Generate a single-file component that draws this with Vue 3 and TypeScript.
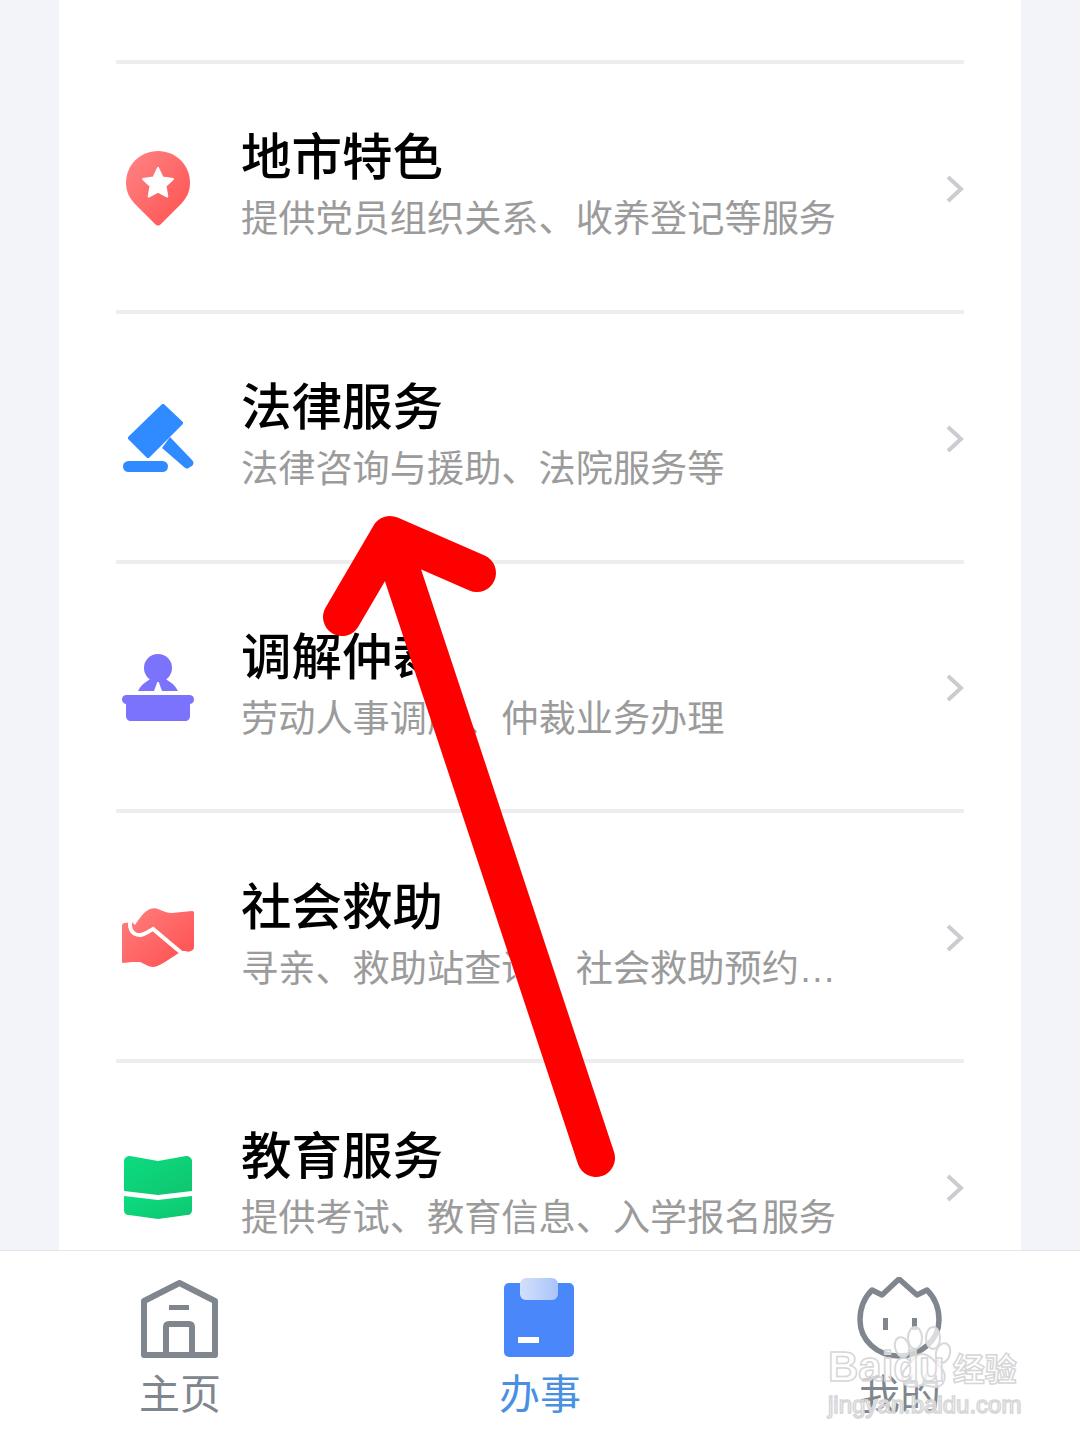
<template>
  <div class="page">
    <main class="content">
      <div class="card">
        <div v-for="item in services" :key="item.title" class="row">
          <div class="row-icon">
            <svg v-if="item.icon === 'pin'" width="70" height="78" viewBox="0 0 70 78">
              <defs>
                <linearGradient id="pinFill" x1="0" y1="0" x2="1" y2="1">
                  <stop offset="0" stop-color="#ff8585" />
                  <stop offset="1" stop-color="#ff4f4f" />
                </linearGradient>
              </defs>
              <path d="M35 1C17 1 3 15 3 33c0 9 4 16 10 22l19 19c2 2 4 2 6 0l19-19c6-6 10-13 10-22C67 15 53 1 35 1z" fill="url(#pinFill)" />
              <path d="M35 18l4.500 9.500 10.500 1.500-7.500 7 1.800 10.500-9.300-5-9.300 5 1.800-10.500-7.500-7 10.500-1.500z" fill="#fff" stroke="#fff" stroke-width="2" stroke-linejoin="round" />
            </svg>
            <svg v-else-if="item.icon === 'gavel'" width="74" height="70" viewBox="0 0 74 70">
              <path d="M42 2L60 19 27 52 9 34z" fill="#2f8bff" stroke="#2f8bff" stroke-width="4" stroke-linejoin="round" />
              <path d="M49 33L71 56c2 2 2 4 0 6l-2 1c-2 2-4 2-6 0L41 44z" fill="#2f8bff" />
              <rect x="2" y="57" width="45" height="11" rx="5.500" fill="#2f8bff" />
            </svg>
            <svg v-else-if="item.icon === 'desk'" width="74" height="68" viewBox="0 0 74 68">
              <circle cx="37" cy="14" r="14" fill="#7b73fb" />
              <path d="M17 37c4-8 11-11 16-14l4 2 4-2c5 3 12 6 16 14H41l-4-11-4 11z" fill="#7b73fb" />
              <rect x="1" y="41" width="72" height="9" rx="4.500" fill="#7b73fb" />
              <path d="M5 46h64v16c0 3-2 5-5 5H10c-3 0-5-2-5-5z" fill="#7b73fb" />
            </svg>
            <svg v-else-if="item.icon === 'hands'" width="76" height="60" viewBox="0 0 76 60">
              <defs>
                <linearGradient id="handFill" x1="0" y1="0" x2="1" y2="1">
                  <stop offset="0" stop-color="#ff8080" />
                  <stop offset="1" stop-color="#ff4d4d" />
                </linearGradient>
              </defs>
              <path d="M2 18c0-2 1-3 3-3l7-1 3 3C20 9 25 3 30 1c3-1 6-1 8 0 5 2 9 4 14 4l20-2c2 0 2 1 2 2v34c0 2-1 3-3 4-2 1-4 1-5 0l-4 0-17 11c-4 2-8 5-12 5-4 0-8-3-13-5H12l-9 1c-1 0-1-1-1-3z" fill="url(#handFill)" />
              <path d="M11 11C8 20 12 27 20 27 25 27 29 23 33 21L64 47" fill="none" stroke="#fff" stroke-width="4" />
            </svg>
            <svg v-else width="68" height="64" viewBox="0 0 68 64">
              <defs>
                <linearGradient id="bookFill" x1="0" y1="0" x2="1" y2="1">
                  <stop offset="0" stop-color="#0bdc80" />
                  <stop offset="1" stop-color="#10c56e" />
                </linearGradient>
              </defs>
              <path d="M6 0l28 5 28-5c3 0 6 2 6 5v30l-34 4L0 35V5c0-3 3-5 6-5z" fill="url(#bookFill)" />
              <path d="M0 40l34 4 34-4v14c0 3-2 5-5 5l-29 4-29-4c-3 0-5-2-5-5z" fill="url(#bookFill)" />
            </svg>
          </div>
          <div class="row-text">
            <div class="row-title">{{ item.title }}</div>
            <div class="row-desc">{{ item.desc }}</div>
          </div>
          <svg class="chevron" width="18" height="28" viewBox="0 0 18 28">
            <path d="M2 2l13 12L2 26" fill="none" stroke="#cbcbd0" stroke-width="4" />
          </svg>
        </div>
      </div>
    </main>

    <nav class="tabbar">
      <div class="tab">
        <svg width="80" height="84" viewBox="0 0 80 84">
          <path d="M4 78V24L39.500 6 75 24v54z" fill="none" stroke="#80868d" stroke-width="6" stroke-linejoin="round" />
          <path d="M26 78V50c0-2 1-3 3-3h20c2 0 3 1 3 3v28" fill="none" stroke="#80868d" stroke-width="6" />
          <rect x="29" y="28" width="20" height="5" fill="#80868d" />
        </svg>
        <span class="tab-label">主页</span>
      </div>
      <div class="tab tab--active">
        <svg width="80" height="84" viewBox="0 0 80 84">
          <defs>
            <linearGradient id="clipFill" x1="0" y1="0" x2="1" y2="0">
              <stop offset="0" stop-color="#d3e0fb" />
              <stop offset="1" stop-color="#a9c4fa" />
            </linearGradient>
          </defs>
          <rect x="4" y="6" width="70" height="74" rx="5" fill="#4a87fb" />
          <rect x="20" y="1" width="38" height="22" rx="6" fill="url(#clipFill)" />
          <rect x="18" y="60" width="21" height="6" fill="#fff" />
        </svg>
        <span class="tab-label">办事</span>
      </div>
      <div class="tab">
        <svg width="86" height="84" viewBox="0 0 86 84">
          <path d="M42 2L60 18 70 13C77 20 82 31 82 43 82 63 64 79 42 79 20 79 3 63 3 43 3 31 8 20 15 13L25 18z" fill="none" stroke="#80868d" stroke-width="5.500" stroke-linejoin="round" />
          <rect x="26" y="41" width="5" height="12" fill="#80868d" />
          <rect x="55" y="41" width="5" height="12" fill="#80868d" />
        </svg>
        <span class="tab-label">我的</span>
      </div>
    </nav>

    <!-- red arrow drawn on the screenshot -->
    <svg class="arrow" width="1080" height="1440" viewBox="0 0 1080 1440">
      <path d="M596 1158L390 536M342 617L390 535 477 573" fill="none" stroke="#ff0000" stroke-width="38" stroke-linecap="round" stroke-linejoin="round" />
    </svg>

    <!-- watermark -->
    <div class="watermark">
      <svg class="paw" width="70" height="76" viewBox="0 0 70 76">
        <g fill="#fff" fill-opacity=".7" stroke="#d8d8da" stroke-width="2">
          <ellipse cx="14" cy="27" rx="7" ry="10" transform="rotate(-15 14 27)" />
          <ellipse cx="27" cy="18" rx="7" ry="11" />
          <ellipse cx="45" cy="18" rx="7" ry="11" />
          <ellipse cx="55" cy="33" rx="7" ry="10" transform="rotate(15 55 33)" />
          <path d="M34 34c-8 0-10 8-16 14-6 6-5 18 5 19 5 0 8-2 12-2s8 2 13 2c10-1 11-13 5-19-6-6-11-14-19-14z" />
        </g>
      </svg>
      <div class="wm-line">
        <span class="wm-baidu">Baidu</span><span class="wm-jy">经验</span>
      </div>
      <div class="wm-url">jingyan.baidu.com</div>
    </div>
  </div>
</template>

<script setup lang="ts">
interface Service {
  title: string
  desc: string
  icon: 'pin' | 'gavel' | 'desk' | 'hands' | 'book'
}

const services: Service[] = [
  { title: '地市特色', desc: '提供党员组织关系、收养登记等服务', icon: 'pin' },
  { title: '法律服务', desc: '法律咨询与援助、法院服务等', icon: 'gavel' },
  { title: '调解仲裁', desc: '劳动人事调解、仲裁业务办理', icon: 'desk' },
  { title: '社会救助', desc: '寻亲、救助站查询、社会救助预约…', icon: 'hands' },
  { title: '教育服务', desc: '提供考试、教育信息、入学报名服务', icon: 'book' }
]
</script>

<style>
html,
body {
  margin: 0;
  background: #f2f4f9;
}
</style>

<style scoped>
.page {
  position: relative;
  width: 1080px;
  height: 1440px;
  overflow: hidden;
  display: flex;
  flex-direction: column;
  background: #f2f4f9;
  font-family: "Noto Sans CJK SC", "Noto Sans", sans-serif;
}

.content {
  height: 1250px;
  overflow: hidden;
  padding: 0 59px;
}

.card {
  background: #fff;
  padding: 60px 57px 0;
  height: 1400px;
}

.row {
  display: flex;
  align-items: center;
  height: 249.75px;
  box-sizing: border-box;
  padding-top: 4px;
  border-top: 4px solid #ededef;
}

.row-icon {
  width: 84px;
  flex-shrink: 0;
  display: flex;
  justify-content: center;
  margin-right: 41px;
}

.row-text {
  flex: 1;
  min-width: 0;
  padding-bottom: 12px;
}

.row-title {
  font-size: 50.500px;
  line-height: 64px;
  font-weight: 500;
  color: #000;
}

.row-desc {
  margin-top: 9px;
  font-family: "Liberation Sans", "Noto Sans CJK SC", sans-serif;
  font-size: 37.200px;
  line-height: 50px;
  color: #9b9b9b;
  white-space: nowrap;
}

.chevron {
  flex-shrink: 0;
}

.tabbar {
  height: 190px;
  box-sizing: border-box;
  display: flex;
  background: #fff;
  border-top: 1px solid #e6e6e8;
}

.tab {
  flex: 1;
  display: flex;
  flex-direction: column;
  align-items: center;
  padding-top: 26px;
}

.tab-label {
  font-size: 41px;
  line-height: 50px;
  color: #80868d;
  margin-top: 5px;
}

.tab--active .tab-label {
  color: #4a90e2;
}

.arrow {
  position: absolute;
  left: 0;
  top: 0;
}

.watermark {
  position: absolute;
  left: 828px;
  top: 1330px;
  width: 200px;
  font-family: "Liberation Sans", sans-serif;
}

.paw {
  position: absolute;
  left: 60px;
  top: -10px;
}

.wm-line {
  position: absolute;
  top: 12px;
  left: 0;
  white-space: nowrap;
  display: flex;
  align-items: center;
}

.wm-baidu,
.wm-jy,
.wm-url {
  color: rgba(255, 255, 255, 0.6);
  -webkit-text-stroke: 1.500px #d6d6d8;
}

.wm-baidu {
  font-size: 42px;
  font-weight: 700;
  line-height: 50px;
}

.wm-jy {
  font-family: "Noto Sans CJK SC", sans-serif;
  font-size: 32px;
  font-weight: 700;
  line-height: 50px;
  margin-left: 8px;
}

.wm-url {
  position: absolute;
  top: 60px;
  left: 0;
  font-size: 24px;
  line-height: 30px;
  white-space: nowrap;
}
</style>
